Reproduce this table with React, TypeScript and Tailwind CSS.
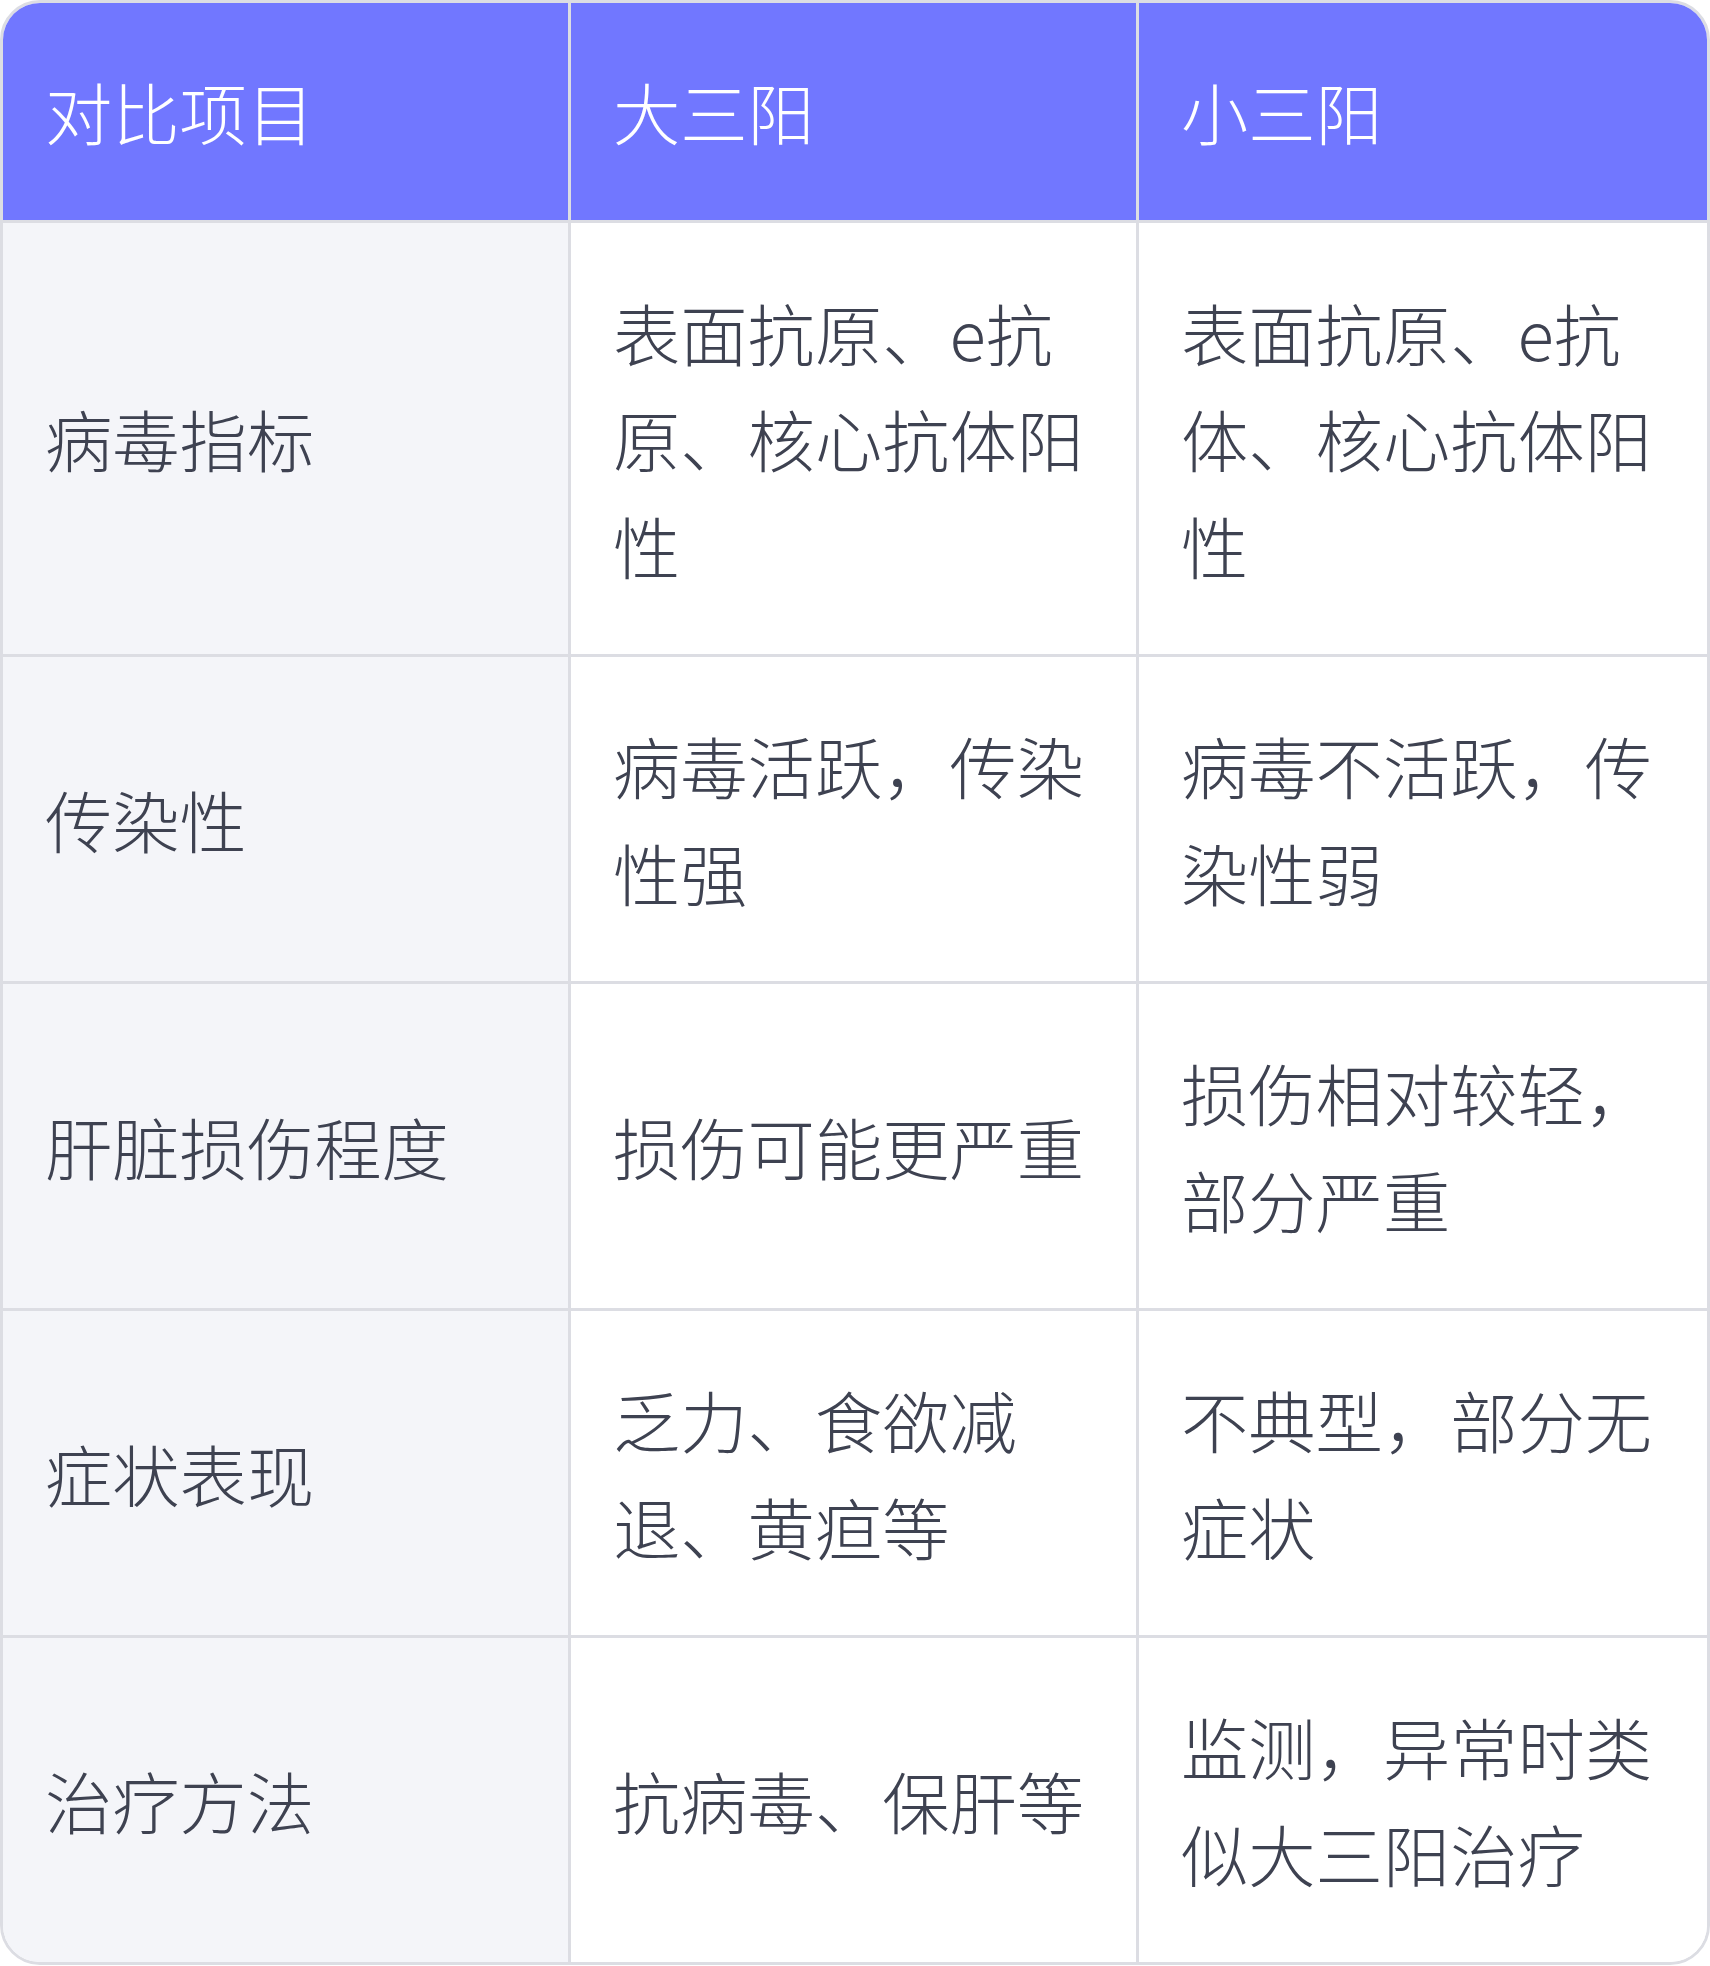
import React from "react";

const rows: [string, string, string][] = [
  ["病毒指标", "表面抗原、e抗原、核心抗体阳性", "表面抗原、e抗体、核心抗体阳性"],
  ["传染性", "病毒活跃，传染性强", "病毒不活跃，传染性弱"],
  ["肝脏损伤程度", "损伤可能更严重", "损伤相对较轻，部分严重"],
  ["症状表现", "乏力、食欲减退、黄疸等", "不典型，部分无症状"],
  ["治疗方法", "抗病毒、保肝等", "监测，异常时类似大三阳治疗"],
];

const font = { fontFamily: '"Noto Sans CJK SC", "Noto Sans", sans-serif' };

export default function App() {
  return (
    <div className="w-[1710px] bg-white" style={font}>
      <div className="border-[3px] border-[#dcdde3] rounded-[40px] overflow-hidden">
        <div className="grid grid-cols-3 bg-[#7177ff] border-b-[3px] border-[#dcdde3]">
          {["对比项目", "大三阳", "小三阳"].map((h, i) => (
            <div
              key={h}
              className={`px-[42px] py-[55.33px] text-[67.3px] leading-[106.67px] text-white font-light ${
                i < 2 ? "border-r-[3px] border-[#dcdde3]" : ""
              }`}
            >
              {h}
            </div>
          ))}
        </div>
        {rows.map((r, ri) => (
          <div
            key={ri}
            className={`grid grid-cols-3 ${ri < rows.length - 1 ? "border-b-[3px] border-[#dcdde3]" : ""}`}
          >
            {r.map((c, ci) => (
              <div
                key={ci}
                className={`flex items-center px-[42px] py-[55.33px] text-[67.3px] leading-[106.67px] text-[#3e4251] font-light ${
                  ci === 0 ? "bg-[#f4f5f9]" : "bg-white"
                } ${ci < 2 ? "border-r-[3px] border-[#dcdde3]" : ""}`}
              >
                <span>{c}</span>
              </div>
            ))}
          </div>
        ))}
      </div>
    </div>
  );
}
